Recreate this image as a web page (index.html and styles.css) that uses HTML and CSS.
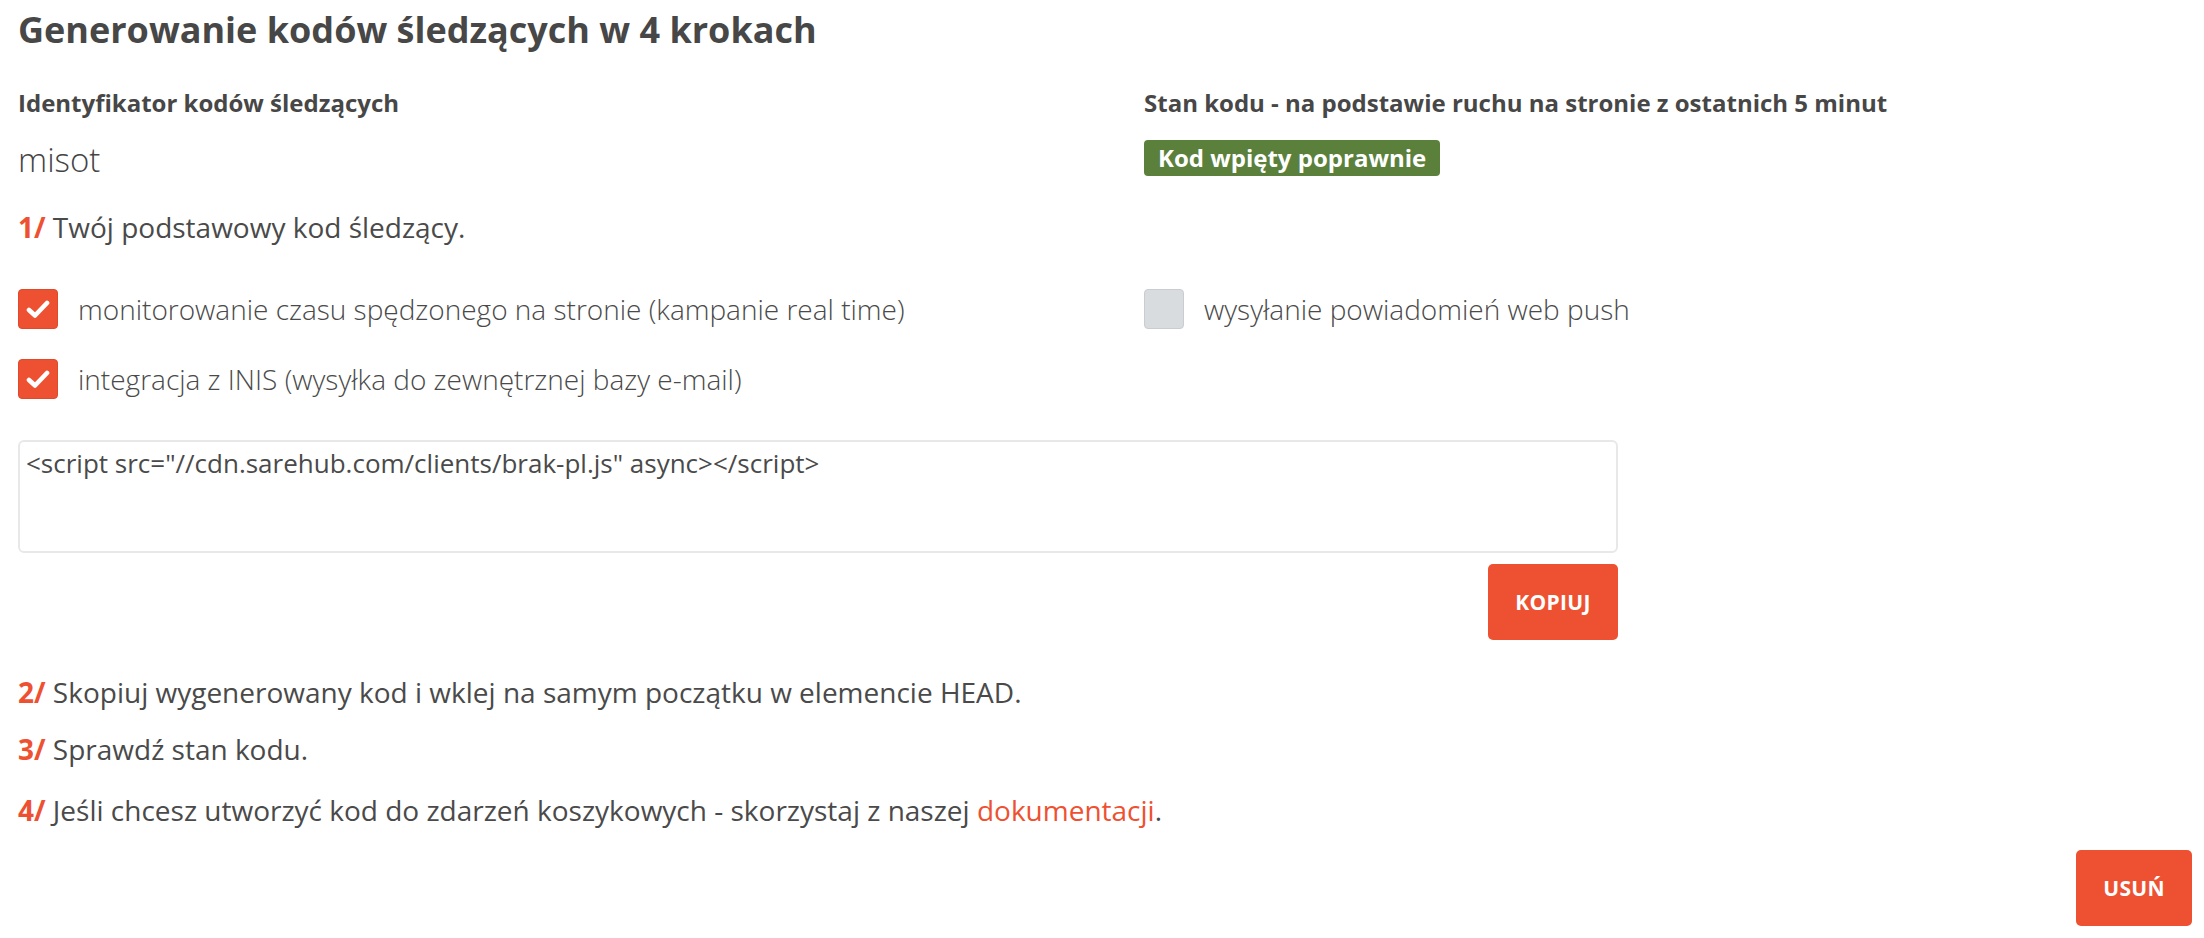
FILE: index.html
```html
<!DOCTYPE html>
<html lang="pl">
<head>
<meta charset="utf-8">
<title>Generowanie kodów śledzących</title>
<link rel="stylesheet" href="styles.css">
</head>
<body>
<div class="page">
  <h1 class="title">Generowanie kodów śledzących w 4 krokach</h1>

  <div class="top-grid">
    <div class="col">
      <div class="label">Identyfikator kodów śledzących</div>
      <div class="ident">misot</div>
    </div>
    <div class="col">
      <div class="label">Stan kodu - na podstawie ruchu na stronie z ostatnich 5 minut</div>
      <div class="badge">Kod wpięty poprawnie</div>
    </div>
  </div>

  <p class="step step-1"><span class="num">1/</span> Twój podstawowy kod śledzący.</p>

  <div class="options">
    <label class="opt">
      <span class="box checked"><svg viewBox="0 0 24 19" width="24" height="19"><path d="M3 10 L9 15.5 L21 3" fill="none" stroke="#fff" stroke-width="4.6" stroke-linecap="round" stroke-linejoin="round"/></svg></span>
      <span class="opt-text">monitorowanie czasu spędzonego na stronie (kampanie real time)</span>
    </label>
    <label class="opt">
      <span class="box"></span>
      <span class="opt-text">wysyłanie powiadomień web push</span>
    </label>
    <label class="opt">
      <span class="box checked"><svg viewBox="0 0 24 19" width="24" height="19"><path d="M3 10 L9 15.5 L21 3" fill="none" stroke="#fff" stroke-width="4.6" stroke-linecap="round" stroke-linejoin="round"/></svg></span>
      <span class="opt-text">integracja z INIS (wysyłka do zewnętrznej bazy e-mail)</span>
    </label>
  </div>

  <div class="code-block">
    <div class="code">&lt;script src="//cdn.sarehub.com/clients/brak-pl.js" async&gt;&lt;/script&gt;</div>
    <div class="code-actions">
      <button class="btn">KOPIUJ</button>
    </div>
  </div>

  <p class="step step-2"><span class="num">2/</span> Skopiuj wygenerowany kod i wklej na samym początku w elemencie HEAD.</p>
  <p class="step step-3"><span class="num">3/</span> Sprawdź stan kodu.</p>
  <p class="step step-4"><span class="num">4/</span> Jeśli chcesz utworzyć kod do zdarzeń koszykowych - skorzystaj z naszej <a class="link" href="#">dokumentacji</a>.</p>

  <div class="footer-actions">
    <button class="btn btn-delete">USUŃ</button>
  </div>
</div>
</body>
</html>
```

FILE: styles.css
```css
* { box-sizing: border-box; }

html, body {
  margin: 0;
  padding: 0;
  background: #fff;
}

body {
  font-family: "Open Sans", "Liberation Sans", sans-serif;
  color: #4a4a4a;
}

.page {
  padding: 0 12px 0 18px;
}

.title {
  margin: 0;
  padding-top: 5px;
  font-size: 36px;
  line-height: 50px;
  font-weight: 700;
  color: #474747;
}

.top-grid {
  display: grid;
  grid-template-columns: 1126px 1fr;
  margin-top: 33px;
}

.label {
  font-size: 24px;
  line-height: 30px;
  font-weight: 700;
  color: #474747;
}

.ident {
  margin-top: 22px;
  font-size: 33px;
  line-height: 40px;
  font-weight: 300;
  color: #444;
}

.badge {
  display: inline-block;
  margin-top: 22px;
  height: 36px;
  padding: 0 14px;
  line-height: 36px;
  background: #5b803c;
  color: #fff;
  font-size: 24px;
  font-weight: 700;
  border-radius: 4px;
}

.step {
  margin: 0;
  font-size: 28px;
  line-height: 36px;
  font-weight: 400;
  color: #4a4a4a;
}

.num {
  color: #ee5131;
  font-weight: 700;
}

.step-1 { margin-top: 29px; }

.options {
  display: grid;
  grid-template-columns: 1126px 1fr;
  row-gap: 31px;
  margin-top: 44px;
}

.opt {
  display: flex;
  align-items: center;
  gap: 20px;
  height: 39px;
}

.box {
  width: 40px;
  height: 40px;
  flex: none;
  border-radius: 4px;
  background: #d8dcdf;
  border: 1px solid #c9cdd1;
  display: flex;
  align-items: center;
  justify-content: center;
}

.box.checked {
  background: #ee5131;
  border-color: #e04a2b;
}

.box svg {
  margin-top: 2px;
}

.opt-text {
  font-size: 28px;
  font-weight: 300;
  color: #4a4a4a;
}

.code-block {
  width: 1600px;
  margin-top: 42px;
}

.code {
  height: 113px;
  border: 2px solid #e8e8e8;
  border-radius: 6px;
  padding: 6px 6px;
  font-size: 26px;
  line-height: 30px;
  font-weight: 400;
  color: #4a4a4a;
}

.code-actions {
  display: flex;
  justify-content: flex-end;
  margin-top: 11px;
}

.btn {
  font-family: "Open Sans", "Liberation Sans", sans-serif;
  background: #ee5131;
  color: #fff;
  border: none;
  border-radius: 5px;
  font-size: 21px;
  font-weight: 700;
  width: 130px;
  height: 76px;
  padding: 0;
  letter-spacing: 0.3px;
}

.step-2 { margin-top: 34px; }
.step-3 { margin-top: 21px; }
.step-4 { margin-top: 25px; }

.link {
  color: #ee5131;
  text-decoration: none;
}

.footer-actions {
  display: flex;
  justify-content: flex-end;
  margin-top: 22px;
}

.btn-delete {
  width: 116px;
}
```
